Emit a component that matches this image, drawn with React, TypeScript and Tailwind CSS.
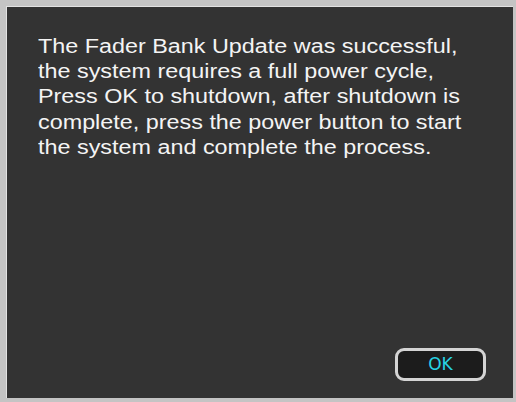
import React from "react";

const App = () => {
  return (
    <div className="w-[516px] h-[402px] bg-[#c4c4c4] pt-[6px] pl-[6px] pr-[3px] pb-[4px] overflow-hidden">
      <div className="w-full h-full bg-[#333333] flex flex-col border-l border-t border-[#e2e2e2]">
        <p
          className="ml-[31px] mt-[27px] text-[20px] leading-[25.2px] text-[#f4f4f4] origin-left scale-x-[1.168] whitespace-nowrap"
          style={{ fontFamily: '"Liberation Sans", Arial, sans-serif' }}
        >
          The Fader Bank Update was successful,
          <br />
          the system requires a full power cycle,
          <br />
          Press OK to shutdown, after shutdown is
          <br />
          complete, press the power button to start
          <br />
          the system and complete the process.
        </p>
        <div className="mt-auto flex justify-end pr-[27px] pb-[17px]">
          <button
            className="w-[91px] h-[33px] rounded-[9px] border-[3px] border-[#d4d4d4] bg-[#1c1c1c] text-[#27d3e3] text-[17px] flex items-center justify-center"
            style={{ fontFamily: '"DejaVu Sans", Verdana, sans-serif' }}
          >
            OK
          </button>
        </div>
      </div>
    </div>
  );
};

export default App;
